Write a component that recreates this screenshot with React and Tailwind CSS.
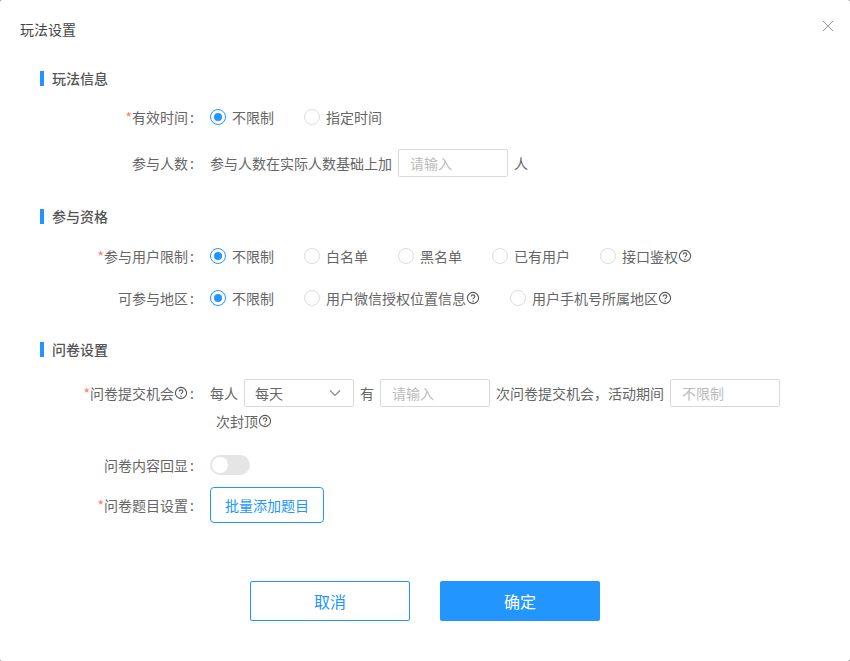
const Q = () => (
  <svg width="14" height="14" viewBox="0 0 14 14" fill="none" className="shrink-0 -mt-[1px]">
    <circle cx="7" cy="7" r="5.6" stroke="#555" strokeWidth="1.1" />
    <path d="M5.2 5.6c0-1 .8-1.7 1.8-1.7s1.8.7 1.8 1.6c0 1.4-1.8 1.3-1.8 2.8" stroke="#555" strokeWidth="1.1" />
    <circle cx="7" cy="10.2" r=".75" fill="#555" />
  </svg>
);

const Radio = ({ checked, label, help, className = "" }) => (
  <div className={`flex items-center ${className}`}>
    <span className={`w-4 h-4 rounded-full border flex items-center justify-center mr-[6px] ${checked ? "border-[#2395ff]" : "border-[#dcdcdc]"}`}>
      {checked && <span className="w-2 h-2 rounded-full bg-[#2395ff]" />}
    </span>
    <span>{label}</span>
    {help && <Q />}
  </div>
);

const Section = ({ title, className = "" }) => (
  <div className={`flex items-center h-[16px] ml-10 ${className}`}>
    <span className="w-1 h-[15px] bg-[#2395ff] mr-2" />
    <span className="font-medium text-[#555]">{title}</span>
  </div>
);

const Label = ({ req, children }) => (
  <div className="w-[194px] shrink-0 flex items-center justify-end mr-4">
    {req && <span className="text-[#ff7d6e]">*</span>}
    {children}
    <span className="w-[6px] pl-[2px]">:</span>
  </div>
);

const Input = ({ placeholder, className = "" }) => (
  <div className={`w-[110px] h-[28px] border border-[#d9d9d9] rounded-[2px] pl-[11px] flex items-center text-[#bbb] shrink-0 ${className}`}>
    {placeholder}
  </div>
);

export default function App() {
  return (
    <div className="w-[850px] h-[661px] bg-[#777]">
      <div
        className="w-[850px] h-[661px] bg-white rounded-[2px] text-[14px] text-[#666] overflow-hidden relative"
        style={{ fontFamily: '"Noto Sans CJK SC", "Liberation Sans", sans-serif' }}
      >
        <div className="h-[20px] ml-5 pt-[19px] box-content leading-[20px] text-[#444]">玩法设置</div>
        <svg className="absolute left-[822px] top-[20px]" width="12" height="12" viewBox="0 0 12 12" stroke="#999" strokeWidth="1">
          <path d="M1 1l10 10M11 1L1 11" />
        </svg>

        <Section title="玩法信息" className="mt-[31px]" />
        <div className="flex items-center h-[20px] mt-[21px]">
          <Label req>有效时间</Label>
          <Radio checked label="不限制" className="w-[94px]" />
          <Radio label="指定时间" />
        </div>
        <div className="flex items-center h-[28px] mt-[22px]">
          <Label>参与人数</Label>
          <span className="mr-[6px]">参与人数在实际人数基础上加</span>
          <Input placeholder="请输入" />
          <span className="ml-[6px]">人</span>
        </div>

        <Section title="参与资格" className="mt-[31px]" />
        <div className="flex items-center h-[20px] mt-[22px]">
          <Label req>参与用户限制</Label>
          <Radio checked label="不限制" className="w-[94px]" />
          <Radio label="白名单" className="w-[94px]" />
          <Radio label="黑名单" className="w-[94px]" />
          <Radio label="已有用户" className="w-[108px]" />
          <Radio label="接口鉴权" help />
        </div>
        <div className="flex items-center h-[20px] mt-[22px]">
          <Label>可参与地区</Label>
          <Radio checked label="不限制" className="w-[94px]" />
          <Radio label="用户微信授权位置信息" help className="w-[206px]" />
          <Radio label="用户手机号所属地区" help />
        </div>

        <Section title="问卷设置" className="mt-[33px]" />
        <div className="flex items-center h-[28px] mt-[22px]">
          <Label req>问卷提交机会<Q /></Label>
          <span className="mr-[6px]">每人</span>
          <div className="w-[110px] h-[28px] border border-[#d9d9d9] rounded-[2px] pl-[10px] pr-[12px] flex items-center justify-between shrink-0">
            <span>每天</span>
            <svg width="12" height="8" viewBox="0 0 12 8" fill="none" stroke="#888" strokeWidth="1.2">
              <path d="M1 1.5l5 5 5-5" />
            </svg>
          </div>
          <span className="mx-[6px]">有</span>
          <Input placeholder="请输入" />
          <span className="mx-[6px]">次问卷提交机会，活动期间</span>
          <Input placeholder="不限制" />
        </div>
        <div className="flex items-center h-[20px] mt-[4px] ml-[216px]">
          <span>次封顶</span>
          <Q />
        </div>
        <div className="flex items-center h-[20px] mt-[24px]">
          <Label>问卷内容回显</Label>
          <div className="w-10 h-5 rounded-full bg-[#e5e5e5] relative">
            <span className="absolute left-[2px] top-[2px] w-4 h-4 rounded-full bg-white" />
          </div>
        </div>
        <div className="flex items-center h-[36px] mt-[12px]">
          <Label req><span className="-mt-[1px] contents">问卷题目设置</span></Label>
          <button className="w-[114px] h-[36px] border border-[#2395ff] rounded-[4px] text-[#2395ff] bg-white">批量添加题目</button>
        </div>

        <div className="flex justify-center gap-[30px] mt-[58px]">
          <button className="w-[160px] h-[40px] border border-[#2395ff] rounded-[2px] text-[#2395ff] bg-white text-[16px]">取消</button>
          <button className="w-[160px] h-[40px] rounded-[2px] text-white bg-[#2395ff] text-[16px]">确定</button>
        </div>
      </div>
    </div>
  );
}
